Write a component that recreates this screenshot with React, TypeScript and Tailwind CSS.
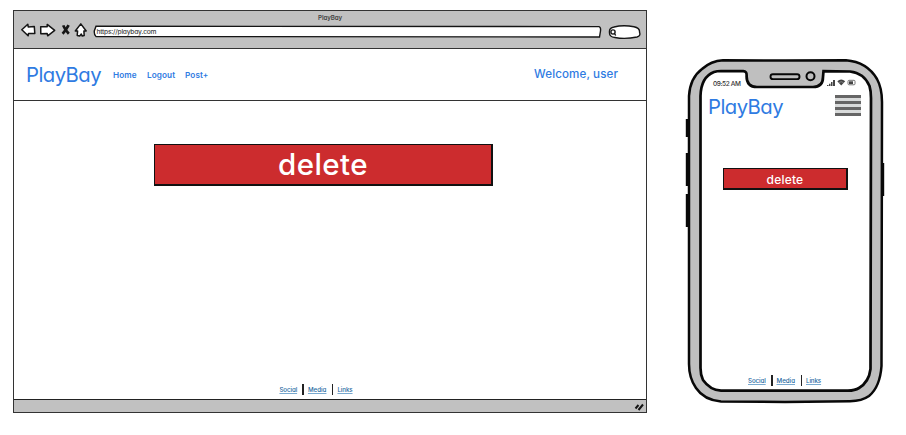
import type { ReactNode } from "react";

const INK = "#151515";

function Label({ children, className = "" }: { children: ReactNode; className?: string }) {
  return (
    <span className={`block whitespace-nowrap leading-none [font-feature-settings:'cv11'] ${className}`}>{children}</span>
  );
}

function NavIcons() {
  return (
    <svg width="70" height="18" viewBox="0 0 70 18" fill="white" stroke={INK} strokeWidth="1.5" strokeLinejoin="round">
      <path d="M.8 7.8 6.8 2.2 7.2 4.9 13.3 4.5 13.8 11.5 7.5 11.5 7.1 13.8Z" />
      <path d="M19.7 4.8 26.2 4.7 26.2 2.4 33.7 8.4 26.7 13.8 26.2 11.6 19.8 11.7Z" />
      <path d="M42.2 3.4Q43.7 7.5 47.8 11.7M47.6 3.2Q45.2 8 41.6 11.8" strokeWidth="2.7" fill="none" />
      <path d="M59.8 1.9 65.2 9 62.9 8.9 63.2 13.6 61.2 14.1 60.3 12 58.7 14 56.2 13.4 56.6 9 54.3 9Z" />
    </svg>
  );
}

function FooterLinks() {
  return (
    <div className="flex h-[11px] items-center text-[#25699f]">
      <Label className="w-[19px] pt-[1px] text-[6.2px] font-medium tracking-[-0.1px] underline decoration-[#79a9cf] decoration-[0.7px] underline-offset-1">Social</Label>
      <i className="mx-[4px] h-[11px] w-[1.5px] bg-[#222]" />
      <Label className="w-[20px] pt-[1px] text-[6.2px] font-medium underline decoration-[#79a9cf] decoration-[0.7px] underline-offset-1">Media</Label>
      <i className="mx-[4px] h-[11px] w-[1.5px] bg-[#222]" />
      <Label className="pt-[1px] text-[6.2px] font-medium tracking-[-0.1px] underline decoration-[#79a9cf] decoration-[0.7px] underline-offset-1">Links</Label>
    </div>
  );
}

function Browser() {
  return (
    <section className="mt-[10px] ml-[13px] flex h-[403px] w-[634px] flex-col border-[1.5px] border-[#333] bg-white">
      <div className="h-[38px] shrink-0 border-b-[1.5px] border-[#333] bg-[#c1c1c1]">
        <div className="flex h-[11px] justify-center pt-[4px]">
          <Label className="text-[6.2px] font-semibold tracking-[-0.1px] text-[#444]">PlayBay</Label>
        </div>
        <div className="flex pl-[7px]">
          <NavIcons />
          <svg className="mt-[3px] ml-[2px]" width="510" height="14" viewBox="0 0 510 14" fill="white" stroke={INK} strokeWidth="1.4">
            <path d="M3 1.2 506 1.6 Q508 2 507.5 6 L506.5 12 L3 11.5 Q1 10 1.3 6Z" />
            <text x="3.5" y="9" fill="#444" stroke="none" fontSize="6.7" fontWeight="500" textLength="60" style={{ fontFeatureSettings: "'cv11'" }}>https://playbay.com</text>
          </svg>
          <svg className="mt-[3px] ml-[5px]" width="34" height="15" viewBox="0 0 34 15" fill="white" stroke={INK} strokeWidth="1.4">
            <path d="M1.5 7Q1 3 6 2Q15-.2 26 1.7Q32 3 31.5 7Q33 11 29 12Q17 14.5 7 12.5Q1 12 1.5 7Z" />
            <circle cx="5" cy="7" r="2.1" />
            <path d="m6.5 8.5 1.2 2" />
          </svg>
        </div>
      </div>
      <header className="flex h-[52px] shrink-0 items-center border-b-[1.5px] border-[#333] pl-[12px] pr-[28px] pt-[1px] text-[#2f7be2]">
        <Label className="w-[87px] pt-[1px] text-[20.3px] tracking-[-0.55px]">PlayBay</Label>
        <Label className="w-[34px] text-[8.2px] font-semibold tracking-[0.1px]">Home</Label>
        <Label className="w-[38px] text-[8.2px] font-semibold tracking-[0.1px]">Logout</Label>
        <Label className="text-[8.2px] font-semibold tracking-[0.1px]">Post+</Label>
        <Label className="ml-auto text-[11.6px] font-medium tracking-[0.1px]">Welcome, user</Label>
      </header>
      <main className="flex grow flex-col items-center pt-[43px]">
        <button className="mr-[13px] flex h-[42px] w-[339px] justify-center border-t-[1.5px] border-r-[2.5px] border-b-[2.5px] border-l-[1.5px] border-[#111] bg-[#cc2c2e] pt-[5px] text-white">
          <Label className="text-[29.5px] font-medium tracking-[0.4px]">delete</Label>
        </button>
        <div className="mt-auto mr-[28px] mb-[4px]">
          <FooterLinks />
        </div>
      </main>
      <footer className="flex h-[13px] shrink-0 justify-end border-t-[1.5px] border-[#222] bg-[#c1c1c1]">
        <svg width="14" height="12" stroke={INK} strokeWidth="2">
          <path d="m3.5 8.5 3-3.5M6.5 10l4.5-5.5" />
        </svg>
      </footer>
    </section>
  );
}

function PhoneFrame() {
  return (
    <svg className="absolute inset-0" width="200" height="348" viewBox="685 57 200 348" fill="none" stroke="#080808">
      <path d="M687.3 119V137M687.3 153V186M687.3 194V227M882.7 163V196" strokeWidth="3" />
      <path d="M723 60.3 785 60.6 846 60.3Q867 62 877 79Q882 88 882 102L881.5 366Q880 387 869 396Q862 401 850 401.2L785 402 721 401.5Q704 400 696 388Q689 378 689 364L689 96Q690 78 702 69Q711 61 723 60.3Z" fill="#bfbfbf" strokeWidth="2.5" />
      <path d="M721 71 743 71.2Q747 71 746.6 76Q746.5 87 757 87L813 87Q823 87 823 77L823.5 71.2 850 71.5Q864 73 869.5 86Q871 91 871 98L870.5 369Q869 382 859 388Q855 390.5 848 390.7L721 390.7Q710 390 703 380Q700.5 375 700.5 368L700.5 96Q701 77 714 72Q717 71 721 71Z" fill="white" strokeWidth="2.7" />
      <rect x="770.5" y="74.3" width="29" height="4.8" rx="2.4" strokeWidth="1.9" />
      <circle cx="810.5" cy="76.2" r="4" strokeWidth="2" />
    </svg>
  );
}

function StatusIcons() {
  return (
    <svg width="30" height="9" viewBox="0 0 30 9" fill="#444">
      <path d="M0 7h1.5v1H0ZM2 5.8h1.5V8H2ZM4 4h1.5v4H4ZM6 2h2v6H6Z" />
      <path d="M10.3 3.3Q14.2-.1 18.2 3.3L14.2 7.5Z" />
      <path d="M12 4.6Q14.2 2.8 16.4 4.6" stroke="#bbb" strokeWidth=".5" fill="none" />
      <rect x="21" y="2.3" width="7" height="4.5" rx="1" fill="white" stroke="#777" />
      <path d="M22 3.3h4v2.7h-4Z" />
    </svg>
  );
}

function Phone() {
  return (
    <section className="relative mt-[57px] ml-[38px] h-[348px] w-[200px]">
      <PhoneFrame />
      <div className="relative flex h-full flex-col">
        <div className="flex h-[38px] items-start pl-[28px] pt-[21px]">
          <Label className="w-[114px] pt-[3px] text-[6.5px] font-medium tracking-[-0.38px] text-[#333]">09:52 AM</Label>
          <StatusIcons />
        </div>
        <div className="flex h-[23px] items-start pl-[23px]">
          <Label className="w-[127px] pt-[2px] text-[20.3px] tracking-[-0.55px] text-[#2f7be2]">PlayBay</Label>
          <div className="flex h-[21px] w-[26px] flex-col justify-between bg-[#d9dbdb]">
            <i className="h-[3px] bg-[#666]" />
            <i className="h-[3px] bg-[#666]" />
            <i className="h-[3px] bg-[#666]" />
            <i className="h-[3px] bg-[#666]" />
          </div>
        </div>
        <button className="mt-[50px] ml-[38px] flex h-[22px] w-[125px] justify-center border-t-[1.5px] border-r-[2px] border-b-[2.5px] border-l-[1.5px] border-[#111] bg-[#cc2c2e] pt-[4.5px] text-white">
          <Label className="text-[12px] font-medium tracking-[0.2px]">delete</Label>
        </button>
        <div className="mt-auto mb-[19px] ml-[63px]">
          <FooterLinks />
        </div>
      </div>
    </section>
  );
}

export default function App() {
  return (
    <div className="flex h-[435px] w-[906px] items-start overflow-hidden bg-white font-[Inter,sans-serif]">
      <Browser />
      <Phone />
    </div>
  );
}
